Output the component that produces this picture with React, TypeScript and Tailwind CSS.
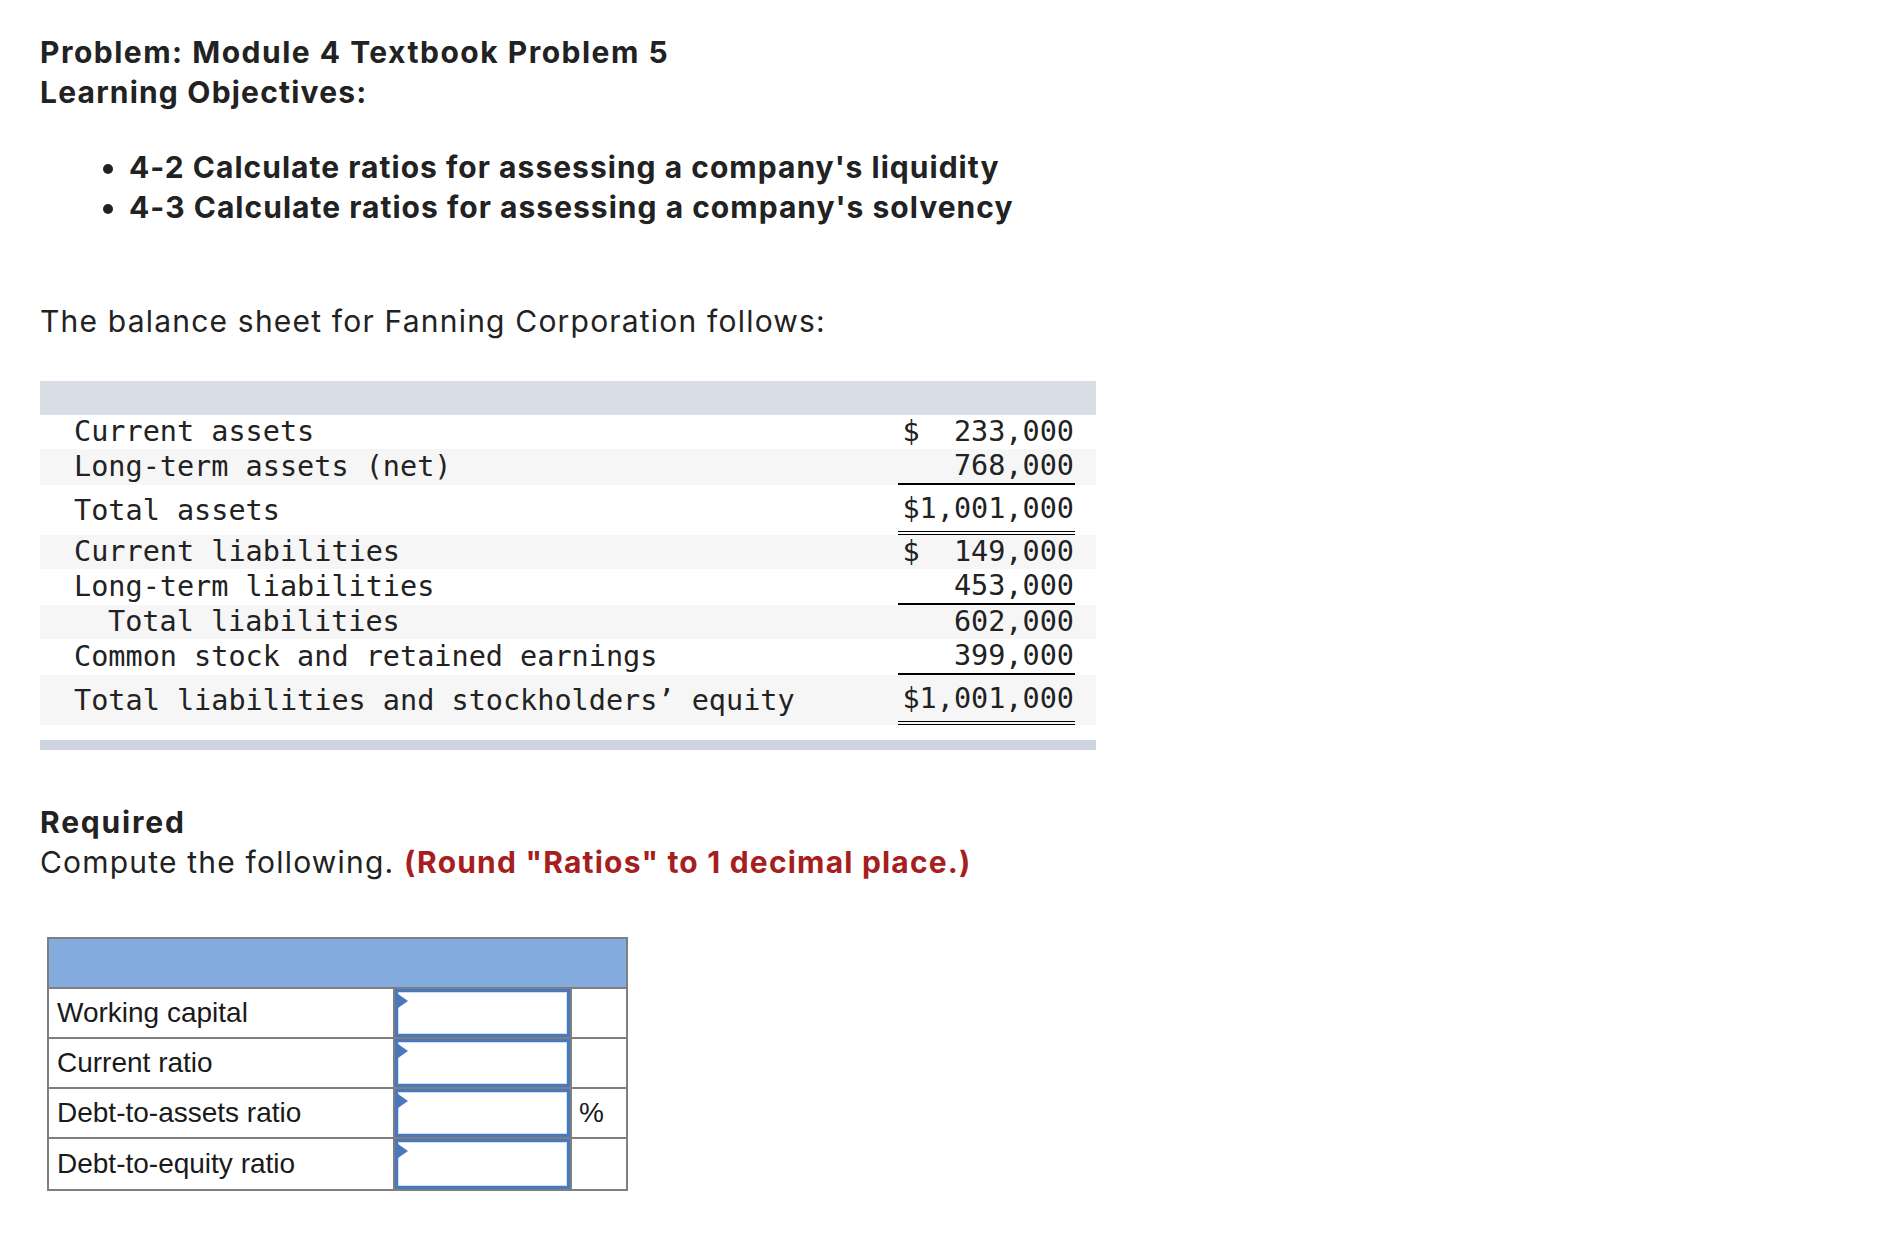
const sheet = [
  { label: "Current assets", value: "$  233,000", bg: "bg-white", h: "h-[34px]", line: "" },
  { label: "Long-term assets (net)", value: "768,000", bg: "bg-[#f6f6f6]", h: "h-[36px]", line: "border-b-2 border-black" },
  { label: "Total assets", value: "$1,001,000", bg: "bg-white", h: "h-[50px] pt-[2px]", line: "border-b-[4px] border-double border-black" },
  { label: "Current liabilities", value: "$  149,000", bg: "bg-[#f6f6f6]", h: "h-[34px]", line: "" },
  { label: "Long-term liabilities", value: "453,000", bg: "bg-white", h: "h-[36px]", line: "border-b-2 border-black" },
  { label: "Total liabilities", value: "602,000", bg: "bg-[#f6f6f6]", h: "h-[34px]", line: "", indent: true },
  { label: "Common stock and retained earnings", value: "399,000", bg: "bg-white", h: "h-[36px]", line: "border-b-2 border-black" },
  { label: "Total liabilities and stockholders\u2019 equity", value: "$1,001,000", bg: "bg-[#f6f6f6]", h: "h-[50px] pt-[2px]", line: "border-b-[4px] border-double border-black" },
];

const answers = [
  { label: "Working capital", unit: "" },
  { label: "Current ratio", unit: "" },
  { label: "Debt-to-assets ratio", unit: "%" },
  { label: "Debt-to-equity ratio", unit: "" },
];

const App = () => {
  return (
    <div className="min-h-[1246px] bg-white pl-[40px] pt-[32px] text-[#222] font-['Inter','Noto_Sans',sans-serif] text-[30px] leading-[40px]">
      <div className="tracking-[0.04em]">
        <h1 className="font-bold tracking-[0.05em]">Problem: Module 4 Textbook Problem 5</h1>
        <h2 className="font-bold">Learning Objectives:</h2>

        <ul className="mt-[35px] pl-[89px] list-disc font-bold tracking-[0.034em]">
          <li>4-2 Calculate ratios for assessing a company's liquidity</li>
          <li>4-3 Calculate ratios for assessing a company's solvency</li>
        </ul>

        <p className="mt-[74px]">The balance sheet for Fanning Corporation follows:</p>
      </div>

      {/* balance sheet */}
      <div className="mt-[40px] w-[1056px] font-['DejaVu_Sans_Mono',monospace] text-[28.5px] leading-none">
        <div className="h-[34px] bg-[#d9dde6]" />
        {sheet.map((row) => (
          <div key={row.label} className={`flex ${row.h} ${row.bg} pr-[21px]`}>
            <div className={`flex-1 flex items-center whitespace-pre ${row.indent ? "pl-[68px]" : "pl-[34px]"}`}>
              {row.label}
            </div>
            <div className={`w-[177px] flex items-center justify-end pr-[1px] whitespace-pre ${row.line}`}>
              {row.value}
            </div>
          </div>
        ))}
        <div className="h-[15px]" />
        <div className="h-[10px] bg-[#cfd5e0]" />
      </div>

      <div className="mt-[52px] tracking-[0.04em]">
        <p className="font-bold tracking-[0.06em]">Required</p>
        <p>
          Compute the following.{" "}
          <span className="font-bold text-[#a61e1e]">(Round "Ratios" to 1 decimal place.)</span>
        </p>
      </div>

      {/* answer grid */}
      <div className="mt-[55px] ml-[7px] w-[581px] border-2 border-[#7f7f7f] font-['Liberation_Sans',Arial,sans-serif] text-[28px] leading-none text-[#1a1a1a]">
        <div className="h-[50px] bg-[#84acdf] border-b-2 border-[#7f7f7f]" />
        {answers.map((a, i) => (
          <div
            key={a.label}
            className={`flex h-[50px] ${i < answers.length - 1 ? "border-b-2 border-[#7f7f7f]" : ""}`}
          >
            <div className="w-[346px] flex items-center pl-[8px] border-r-2 border-[#7f7f7f]">{a.label}</div>
            <div className="relative w-[175px] border-[3px] border-[#4a78bd] bg-white shadow-[inset_0_0_0_1px_#cddff4]">
              <span className="absolute left-0 top-[2px] w-0 h-0 border-y-[7px] border-y-transparent border-l-[10px] border-l-[#4a78bd]" />
            </div>
            <div className="flex-1 flex items-center pl-[7px] border-l-2 border-[#7f7f7f]">{a.unit}</div>
          </div>
        ))}
      </div>
    </div>
  );
};

export default App;
